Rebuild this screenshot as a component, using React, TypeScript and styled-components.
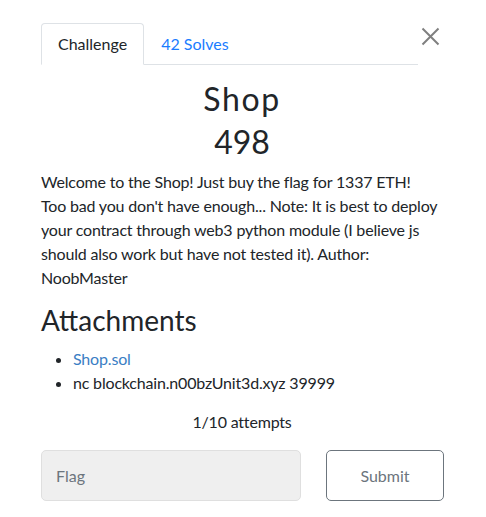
import React from "react";
import styled, { createGlobalStyle } from "styled-components";

const Global = createGlobalStyle`
  html, body { margin: 0; padding: 0; background: #fff; }
  body { font-family: Lato, "Noto Sans", sans-serif; color: #212529; font-size: 16px; line-height: 24px; }
  * { box-sizing: border-box; }
`;

const Page = styled.div`
  width: 486px;
  padding: 23px 43px 0 41px;
`;

const Header = styled.div`
  display: flex;
  align-items: flex-start;
  gap: 2px;
  margin-right: 2px;
`;

const Tabs = styled.ul`
  flex: 1;
  display: flex;
  list-style: none;
  margin: 0;
  padding: 0;
  border-bottom: 1px solid #dee2e6;
`;

const Tab = styled.li<{ $active?: boolean }>`
  margin-bottom: -1px;
  padding: 8px 16px;
  border: 1px solid ${(p) => (p.$active ? "#dee2e6" : "transparent")};
  border-bottom-color: ${(p) => (p.$active ? "#fff" : "transparent")};
  border-radius: 4px 4px 0 0;
  background: ${(p) => (p.$active ? "#fff" : "transparent")};
  color: ${(p) => (p.$active ? "#212529" : "#1a7cff")};
  font-size: 16px;
  line-height: 24px;
`;

const Close = styled.button`
  width: 21px;
  height: 21px;
  margin-top: 3px;
  padding: 0;
  border: 0;
  background: none;
  display: flex;
  align-items: center;
  justify-content: center;
`;

const Title = styled.h2`
  margin: 15px 0 5px;
  text-align: center;
  font-size: 32px;
  font-weight: 400;
  letter-spacing: 1.6px;
  line-height: 38.4px;
`;

const Points = styled.h3`
  margin: 0;
  text-align: center;
  font-size: 32px;
  font-weight: 400;
  line-height: 38.4px;
`;

const Description = styled.p`
  margin: 8px -20px 14px 0;
  font-size: 16px;
  line-height: 24px;
  letter-spacing: -0.18px;
  color: #212529;
`;

const SectionTitle = styled.h3`
  margin: 0 0 10px;
  font-size: 28px;
  font-weight: 400;
  line-height: 33.6px;
`;

const Files = styled.ul`
  margin: 0;
  padding-left: 32px;
  font-size: 16px;
  line-height: 24px;
  letter-spacing: -0.18px;
`;

const FileLink = styled.a`
  color: #3a7ec4;
  text-decoration: none;
`;

const Attempts = styled.p`
  margin: 15px 0 16px;
  text-align: center;
  font-size: 16px;
  line-height: 24px;
  letter-spacing: -0.18px;
`;

const SubmitRow = styled.div`
  display: grid;
  grid-template-columns: 1fr 118px;
  gap: 25px;
  margin-right: -1px;
`;

const FlagInput = styled.input`
  height: 51px;
  padding: 0 14px;
  border: 1px solid #dfdfdf;
  border-radius: 5px;
  background: #efefef;
  font-family: Lato, sans-serif;
  font-size: 16px;
  color: #495057;
  outline: none;
  &::placeholder { color: #6c757d; opacity: 1; }
`;

const SubmitButton = styled.button`
  height: 51px;
  border: 1px solid #6c757d;
  border-radius: 5px;
  background: #fff;
  color: #6c757d;
  font-family: Lato, sans-serif;
  font-size: 16px;
`;

export default function App() {
  return (
    <>
      <Global />
      <Page>
        <Header>
          <Tabs>
            <Tab $active>Challenge</Tab>
            <Tab>42 Solves</Tab>
          </Tabs>
          <Close aria-label="Close">
            <svg width="19" height="19" viewBox="0 0 19 19">
              <path d="M1.5 1.5L17.5 17.5M17.5 1.5L1.5 17.5" stroke="#7f7f7f" strokeWidth="2" />
            </svg>
          </Close>
        </Header>
        <Title>Shop</Title>
        <Points>498</Points>
        <Description>
          Welcome to the Shop! Just buy the flag for 1337 ETH!
          <br />
          Too bad you don't have enough... Note: It is best to deploy
          <br />
          your contract through web3 python module (I believe js
          <br />
          should also work but have not tested it). Author:
          <br />
          NoobMaster
        </Description>
        <SectionTitle>Attachments</SectionTitle>
        <Files>
          <li>
            <FileLink href="#">Shop.sol</FileLink>
          </li>
          <li>nc blockchain.n00bzUnit3d.xyz 39999</li>
        </Files>
        <Attempts>1/10 attempts</Attempts>
        <SubmitRow>
          <FlagInput placeholder="Flag" />
          <SubmitButton>Submit</SubmitButton>
        </SubmitRow>
      </Page>
    </>
  );
}
